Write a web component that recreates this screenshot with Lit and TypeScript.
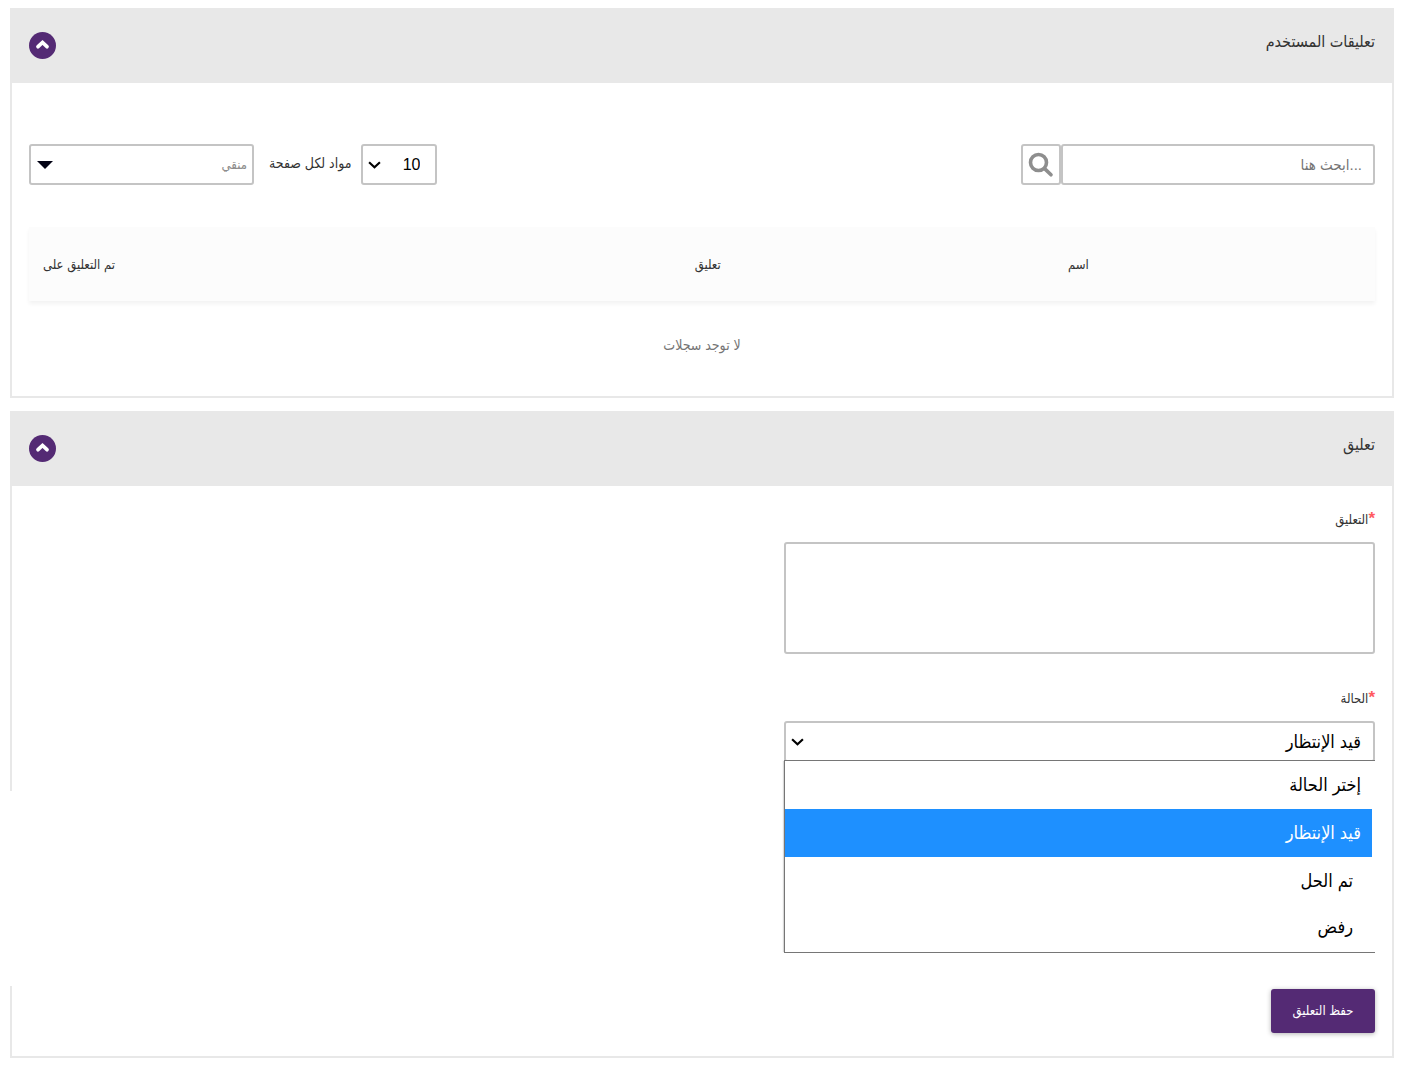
import { LitElement, html, css, svg } from "lit";
import { customElement, property, state } from "lit/decorators.js";
import { classMap } from "lit/directives/class-map.js";

const fontStack = css`"Liberation Sans", "DejaVu Sans Condensed", "DejaVu Sans", sans-serif`;

const chevronDown = html`<svg class="chevron" viewBox="0 0 12 7" aria-hidden="true">
  ${svg`<path d="M1 1 L6 5.6 L11 1" fill="none" stroke="#000" stroke-width="2" />`}
</svg>`;

@customElement("panel-card")
export class PanelCard extends LitElement {
  @property() heading = "";
  @state() private open = true;

  static styles = css`
    :host {
      display: block;
      background: #fff;
      border: 2px solid #e8e8e8;
      border-top: 0;
    }
    .head {
      display: flex;
      align-items: center;
      justify-content: space-between;
      height: 75px;
      padding: 0 17px;
      background: #e8e8e8;
      box-sizing: border-box;
    }
    .title {
      margin: 0;
      padding-bottom: 8px;
      font: 400 16px/24px ${fontStack};
      color: #333;
    }
    .toggle {
      width: 27px;
      height: 27px;
      padding: 0;
      border: 0;
      border-radius: 50%;
      background: #542a74;
      display: block;
    }
    .toggle svg {
      display: block;
      width: 27px;
      height: 27px;
    }
    .closed svg {
      transform: rotate(180deg);
    }
  `;

  render() {
    return html`
      <header class="head">
        <h2 class="title">${this.heading}</h2>
        <button
          class=${classMap({ toggle: true, closed: !this.open })}
          type="button"
          aria-label=${this.heading}
          aria-expanded=${this.open}
          @click=${() => (this.open = !this.open)}
        >
          <svg viewBox="0 0 27 27" aria-hidden="true">
            <path d="M9 14.7 L13.5 10.5 L18 14.7" fill="none" stroke="#fff" stroke-width="3.7" stroke-linecap="round" />
          </svg>
        </button>
      </header>
      <div ?hidden=${!this.open}><slot></slot></div>
    `;
  }
}

@customElement("app-root")
export class AppRoot extends LitElement {
  @state() private status = 1;

  private statuses = [
    { text: "إختر الحالة", nested: false },
    { text: "قيد الإنتظار", nested: false },
    { text: "تم الحل", nested: true },
    { text: "رفض", nested: true },
  ];

  static styles = css`
    :host {
      display: block;
      direction: rtl;
      padding: 8px 10px;
      font: 13px/20px ${fontStack};
      color: #333;
    }
    * {
      box-sizing: border-box;
    }
    input,
    select,
    textarea,
    button {
      font: inherit;
      margin: 0;
    }
    .page {
      display: flex;
      flex-direction: column;
      gap: 13px;
    }
    .comments {
      padding: 61px 17px 9px;
    }
    .toolbar {
      display: flex;
      align-items: center;
      justify-content: space-between;
    }
    .search,
    .paging {
      display: flex;
      align-items: center;
    }
    .box {
      height: 41px;
      border: 2px solid #c4c4c4;
      border-radius: 3px;
      background: #fff;
    }
    .query {
      width: 314px;
      padding: 0 11px;
      font-size: 15px;
      color: #333;
    }
    .query::placeholder {
      color: #757575;
      opacity: 1;
    }
    .go {
      width: 40px;
      padding: 0;
      display: grid;
      place-items: center;
    }
    .go svg {
      width: 26px;
      height: 26px;
    }
    .picker {
      position: relative;
    }
    .picker select {
      appearance: none;
      display: block;
      width: 100%;
    }
    .chevron,
    .caret {
      position: absolute;
      top: 50%;
      transform: translateY(-50%);
      pointer-events: none;
    }
    .chevron {
      left: 7px;
      width: 13px;
      height: 8px;
    }
    .caret {
      left: 8px;
      width: 16px;
      height: 8px;
    }
    .size {
      width: 76px;
    }
    .size select {
      padding: 0 15px;
      font-size: 16px;
      color: #000;
    }
    .unit {
      padding: 0 10px 4px 15px;
      font-size: 14px;
    }
    .filter {
      width: 225px;
    }
    .filter select {
      padding: 0 5px;
      color: #8c8c8c;
    }
    .records {
      width: 100%;
      margin-top: 42px;
      border-spacing: 0;
      table-layout: fixed;
    }
    .records thead {
      background: #fcfcfc;
      box-shadow: 0 3px 4px rgba(0, 0, 0, 0.05);
    }
    .records th {
      height: 74px;
      padding: 2px 17px 0;
      font-weight: 400;
      text-align: right;
      white-space: nowrap;
    }
    .lead {
      width: 20%;
    }
    .wide {
      width: 45%;
    }
    .last {
      width: 103px;
    }
    .none {
      height: 86px;
      padding: 2px 0 0;
      text-align: center;
      font-size: 14px;
      color: #757575;
    }
    .form {
      display: flex;
      flex-direction: column;
      align-items: flex-start;
      padding: 23px 17px;
    }
    .field {
      display: flex;
      flex-direction: column;
      width: 591px;
      max-width: 100%;
    }
    .field label {
      height: 20px;
      margin-bottom: 13px;
    }
    .star {
      font-size: 17px;
      font-weight: 700;
      color: #ff5a5f;
    }
    .note {
      height: 112px;
      margin-bottom: 34px;
      resize: none;
      padding: 10px;
    }
    .state select {
      padding: 0 12px;
      font-size: 18px;
      color: #000;
    }
    .options {
      list-style: none;
      margin: -2px 0 36px;
      padding: 0 3px 2px 0;
      border: 1px solid #767676;
      border-right: 0;
      font-size: 18px;
      color: #000;
      background: #fff;
      position: relative;
      box-shadow: -2px 0 1px -1px #d8d8d8;
    }
    .option {
      height: 48px;
      padding: 0 11px;
      line-height: 48px;
      cursor: default;
    }
    .nested {
      padding: 0 19px;
    }
    .option:last-child {
      height: 45px;
      line-height: 44px;
    }
    .chosen {
      background: #1e90ff;
      color: #fff;
    }
    .save {
      width: 104px;
      height: 44px;
      padding: 0;
      border: 0;
      border-radius: 3px;
      background: #542a74;
      color: #fff;
      box-shadow: 0 1px 5px rgba(0, 0, 0, 0.3);
    }
    .second {
      position: relative;
    }
    .second::after {
      content: "";
      position: absolute;
      left: -2px;
      bottom: 70px;
      width: 2px;
      height: 195px;
      background: #fff;
    }
  `;

  render() {
    return html`
      <main class="page">
        <panel-card heading="تعليقات المستخدم">
          <div class="comments">
            <div class="toolbar">
              <div class="search" role="search">
                <input class="box query" type="text" placeholder="...ابحث هنا" aria-label="ابحث هنا" />
                <button class="box go" type="button" aria-label="ابحث">
                  <svg viewBox="0 0 26 26" aria-hidden="true">
                    <circle cx="10.5" cy="10.5" r="8" fill="none" stroke="#8e8e8e" stroke-width="3.6" />
                    <path d="M16.6 16.6 L23 22.8" fill="none" stroke="#8e8e8e" stroke-width="3.6" stroke-linecap="round" />
                  </svg>
                </button>
              </div>
              <div class="paging">
                <div class="picker size">
                  <select class="box" id="size"><option>10</option></select>
                  ${chevronDown}
                </div>
                <label class="unit" for="size">مواد لكل صفحة</label>
                <div class="picker filter">
                  <select class="box" aria-label="منقي"><option>منقي</option></select>
                  <svg class="caret" viewBox="0 0 16 8" aria-hidden="true"><path d="M0 0 H16 L8 8 Z" fill="#020214" /></svg>
                </div>
              </div>
            </div>
            <table class="records">
              <thead>
                <tr>
                  <td class="lead"></td>
                  <th scope="col">اسم</th>
                  <th class="wide" scope="col">تعليق</th>
                  <th class="last" scope="col">تم التعليق على</th>
                </tr>
              </thead>
              <tbody>
                <tr><td class="none" colspan="4">لا توجد سجلات</td></tr>
              </tbody>
            </table>
          </div>
        </panel-card>

        <panel-card class="second" heading="تعليق">
          <form class="form" @submit=${(e: Event) => e.preventDefault()}>
            <div class="field">
              <label for="note"><span class="star">*</span>التعليق</label>
              <textarea class="box note" id="note" required></textarea>
            </div>
            <div class="field">
              <label for="state"><span class="star">*</span>الحالة</label>
              <div class="picker state">
                <select
                  class="box"
                  id="state"
                  required
                  @change=${(e: Event) => (this.status = (e.target as HTMLSelectElement).selectedIndex)}
                >
                  ${this.statuses.map((s, i) => html`<option .selected=${i === this.status}>${s.text}</option>`)}
                </select>
                ${chevronDown}
              </div>
              <ul class="options" role="listbox" aria-label="الحالة">
                ${this.statuses.map(
                  (s, i) => html`<li
                    class=${classMap({ option: true, nested: s.nested, chosen: i === this.status })}
                    role="option"
                    aria-selected=${i === this.status}
                    @click=${() => (this.status = i)}
                  >${s.text}</li>`
                )}
              </ul>
            </div>
            <button class="save" type="submit">حفظ التعليق</button>
          </form>
        </panel-card>
      </main>
    `;
  }
}
